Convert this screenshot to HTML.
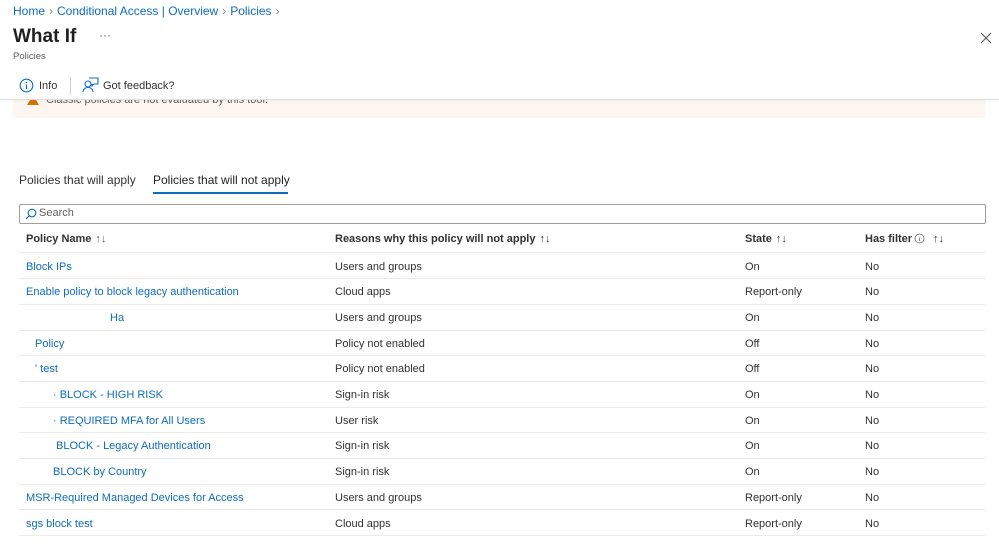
<!DOCTYPE html>
<html><head><style>
body{margin:0;width:999px;height:557px;overflow:hidden;background:#fff;font-family:"Liberation Sans",sans-serif;color:#323130;position:relative}
.a{position:absolute;white-space:nowrap}
.blue{color:#0f6cbd}
.row{position:absolute;left:19px;width:966px;height:25.7px;border-bottom:1px solid #edebe9;font-size:11px}
.row span{position:absolute;top:8px}
.hd span{font-weight:bold;top:7px}
.so{font-weight:normal;color:#605e5c;margin-left:4px}
.sep{color:#8a8886;margin:0 4px}
</style></head><body>
<div class="a blue" style="left:13px;top:4px;font-size:12px">Home<span class="sep">›</span>Conditional Access | Overview<span class="sep">›</span>Policies<span class="sep">›</span></div>
<div class="a" style="left:13px;top:26px;font-size:19px;font-weight:bold;color:#201f1e">What If</div>
<div class="a" style="left:99px;top:28px;font-size:12px;color:#605e5c">···</div>
<div class="a" style="left:13px;top:51px;font-size:9.5px;color:#605e5c">Policies</div>
<svg class="a" style="left:980px;top:32px" width="12" height="12"><path d="M1 1L11 11M11 1L1 11" stroke="#605e5c" stroke-width="1.2"/></svg>
<svg class="a" style="left:19px;top:78px" width="15" height="15"><circle cx="7.5" cy="7.5" r="6.3" fill="none" stroke="#0f6cbd" stroke-width="1.1"/><path d="M7.5 6.5v4.5" stroke="#0f6cbd" stroke-width="1.2"/><circle cx="7.5" cy="4.5" r=".8" fill="#0f6cbd"/></svg>
<div class="a" style="left:39px;top:80px;font-size:11px">Info</div>
<div class="a" style="left:70px;top:77px;width:1px;height:18px;background:#d2d0ce"></div>
<svg class="a" style="left:82px;top:77px" width="17" height="16"><circle cx="6" cy="7" r="3" fill="none" stroke="#0f6cbd" stroke-width="1.1"/><path d="M1 15c0-3 2.5-4.5 5-4.5s5 1.5 5 4.5" fill="none" stroke="#0f6cbd" stroke-width="1.1"/><path d="M7 1h9v6h-4l-2 2V7" fill="none" stroke="#0f6cbd" stroke-width="1.1"/></svg>
<div class="a" style="left:103px;top:80px;font-size:11px">Got feedback?</div>
<div class="a" style="left:13px;top:100px;width:972px;height:18px;background:#fdf6f1;overflow:hidden">
<div class="a" style="left:14px;top:-5px;width:0;height:0;border-left:6px solid transparent;border-right:6px solid transparent;border-bottom:10px solid #d47500"></div>
<div class="a" style="left:33px;top:-6px;font-size:11px;color:#605e5c">Classic policies are not evaluated by this tool.</div></div>
<div class="a" style="left:0;top:99px;width:999px;height:1px;background:#e1dfdd;box-shadow:0 1px 2px rgba(0,0,0,.08)"></div>
<div class="a" style="left:19px;top:173px;font-size:12px;color:#323130">Policies that will apply</div>
<div class="a" style="left:153px;top:173px;font-size:12px;color:#201f1e">Policies that will not apply</div>
<div class="a" style="left:153px;top:192px;width:135px;height:2px;background:#0f6cbd"></div>
<div class="a" style="left:19px;top:204px;width:965px;height:18px;border:1px solid #a19f9d;border-radius:2px"></div>
<svg class="a" style="left:25px;top:208px" width="12" height="12"><circle cx="7" cy="5" r="3.8" fill="none" stroke="#0f6cbd" stroke-width="1.1"/><path d="M4.3 7.7L1 11" stroke="#0f6cbd" stroke-width="1.2"/></svg>
<div class="a" style="left:39px;top:207px;font-size:11px;color:#605e5c">Search</div>
<div class="row hd" style="top:226px;color:#323130"><span style="left:7px">Policy Name<b class="so">↑↓</b></span><span style="left:316px">Reasons why this policy will not apply<b class="so" style="color:#323130">↑↓</b></span><span style="left:726px">State<b class="so" style="color:#323130">↑↓</b></span><span style="left:846px">Has filter</span>
<svg class="a" style="left:895px;top:7px" width="11" height="11"><circle cx="5.5" cy="5.5" r="4.5" fill="none" stroke="#8a8886"/><path d="M5.5 4.5v3.5" stroke="#8a8886"/></svg><span style="left:914px;font-weight:normal">↑↓</span></div>
<div class="row" style="top:252.5px"><span class="blue" style="left:7px">Block IPs</span><span style="left:316px">Users and groups</span><span style="left:726px">On</span><span style="left:846px">No</span></div>
<div class="row" style="top:278.2px"><span class="blue" style="left:7px">Enable policy to block legacy authentication</span><span style="left:316px">Cloud apps</span><span style="left:726px">Report-only</span><span style="left:846px">No</span></div>
<div class="row" style="top:303.9px"><span class="blue" style="left:91px">Ha</span><span style="left:316px">Users and groups</span><span style="left:726px">On</span><span style="left:846px">No</span></div>
<div class="row" style="top:329.6px"><span class="blue" style="left:16px">Policy</span><span style="left:316px">Policy not enabled</span><span style="left:726px">Off</span><span style="left:846px">No</span></div>
<div class="row" style="top:355.3px"><span class="blue" style="left:16px">'&nbsp;test</span><span style="left:316px">Policy not enabled</span><span style="left:726px">Off</span><span style="left:846px">No</span></div>
<div class="row" style="top:381px"><span class="blue" style="left:34px">· BLOCK - HIGH RISK</span><span style="left:316px">Sign-in risk</span><span style="left:726px">On</span><span style="left:846px">No</span></div>
<div class="row" style="top:406.7px"><span class="blue" style="left:34px">· REQUIRED MFA for All Users</span><span style="left:316px">User risk</span><span style="left:726px">On</span><span style="left:846px">No</span></div>
<div class="row" style="top:432.4px"><span class="blue" style="left:37px">BLOCK - Legacy Authentication</span><span style="left:316px">Sign-in risk</span><span style="left:726px">On</span><span style="left:846px">No</span></div>
<div class="row" style="top:458.1px"><span class="blue" style="left:34px">BLOCK by Country</span><span style="left:316px">Sign-in risk</span><span style="left:726px">On</span><span style="left:846px">No</span></div>
<div class="row" style="top:483.8px"><span class="blue" style="left:7px">MSR-Required Managed Devices for Access</span><span style="left:316px">Users and groups</span><span style="left:726px">Report-only</span><span style="left:846px">No</span></div>
<div class="row" style="top:509.5px"><span class="blue" style="left:7px">sgs block test</span><span style="left:316px">Cloud apps</span><span style="left:726px">Report-only</span><span style="left:846px">No</span></div>
</body></html>
